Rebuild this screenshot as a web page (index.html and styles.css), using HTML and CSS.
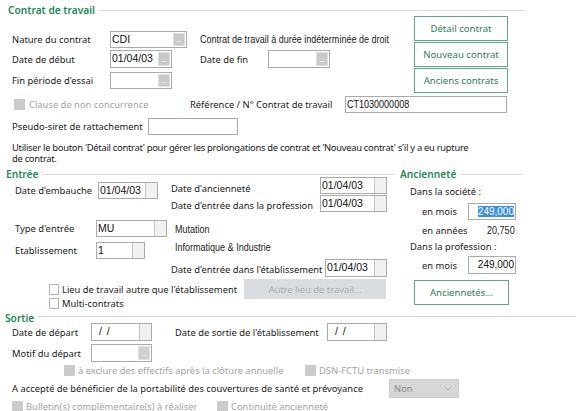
FILE: index.html
```html
<!DOCTYPE html>
<html lang="fr">
<head>
<meta charset="utf-8">
<title>Contrat de travail</title>
<link rel="stylesheet" href="styles.css">
</head>
<body>
<div class="page">

  <section class="contrat">
    <div class="legend lg-contrat"><span>Contrat de travail</span></div>
    <div class="top">
      <div class="top-left">
        <div class="row r1">
          <span class="lbl w98">Nature du contrat</span>
          <span class="fld w77 filled"><span class="val">CDI</span><span class="dots">...</span></span>
          <span class="txt narrow ml13">Contrat de travail à durée indéterminée de droit</span>
        </div>
        <div class="row r2">
          <span class="lbl w98">Date de début</span>
          <span class="fld w62 filled"><span class="val">01/04/03</span><span class="dots">...</span></span>
          <span class="lbl ml28 w68">Date de fin</span>
          <span class="fld w62 filled"><span class="val"></span><span class="dots">...</span></span>
        </div>
        <div class="row r3">
          <span class="lbl w98">Fin période d'essai</span>
          <span class="fld w62 filled"><span class="val"></span><span class="dots">...</span></span>
        </div>
      </div>
      <div class="btns">
        <button class="gbtn">Détail contrat</button>
        <button class="gbtn">Nouveau contrat</button>
        <button class="gbtn">Anciens contrats</button>
      </div>
    </div>
    <div class="row r-ref">
      <span class="chk dis"></span>
      <span class="lbl dim w160">Clause de non concurrence</span>
      <span class="lbl w155">Référence / N° Contrat de travail</span>
      <span class="fld w162"><span class="val"><span class="narrow">CT1030000008</span></span></span>
    </div>
    <div class="row r-siret">
      <span class="lbl w136">Pseudo-siret de rattachement</span>
      <span class="fld w90"><span class="val"></span></span>
    </div>
    <p class="note">Utiliser le bouton 'Détail contrat' pour gérer les prolongations de contrat et 'Nouveau contrat' s'il y a eu rupture de contrat.</p>
  </section>

  <div class="mid">
    <section class="entree">
      <div class="legend lg-entree"><span>Entrée</span></div>
      <div class="blk-a">
        <div class="emb">
          <span class="lbl w83">Date d'embauche</span>
          <span class="fld w60 light"><span class="val">01/04/03</span><span class="dots"></span></span>
        </div>
        <div class="anc-dates">
          <div class="row ra1">
            <span class="lbl w149">Date d'ancienneté</span>
            <span class="fld w67 light"><span class="val">01/04/03</span><span class="dots"></span></span>
          </div>
          <div class="row ra2">
            <span class="lbl w149">Date d'entrée dans la profession</span>
            <span class="fld w67 light"><span class="val">01/04/03</span><span class="dots"></span></span>
          </div>
        </div>
      </div>
      <div class="row re3">
        <span class="lbl w81">Type d'entrée</span>
        <span class="fld w71 light"><span class="val">MU</span><span class="dots"></span></span>
        <span class="txt narrow ml8">Mutation</span>
      </div>
      <div class="row re4">
        <span class="lbl w81">Etablissement</span>
        <span class="fld w49 light"><span class="val">1</span><span class="dots"></span></span>
        <span class="txt narrow ml30 up4">Informatique &amp; Industrie</span>
      </div>
      <div class="row re5">
        <span class="lbl w154">Date d'entrée dans l'établissement</span>
        <span class="fld w62 light"><span class="val">01/04/03</span><span class="dots"></span></span>
      </div>
      <div class="row re6">
        <span class="chk"></span>
        <span class="lbl w182">Lieu de travail autre que l'établissement</span>
        <button class="dbtn">Autre lieu de travail...</button>
      </div>
      <div class="row re7">
        <span class="chk"></span>
        <span class="lbl">Multi-contrats</span>
      </div>
    </section>

    <section class="anciennete">
      <div class="legend lg-anc"><span>Ancienneté</span></div>
      <div class="sub s1">Dans la société :</div>
      <div class="row ra-m1">
        <span class="lbl w46">en mois</span>
        <span class="fld w48 num"><span class="val"><span class="sel">249,000</span></span></span>
      </div>
      <div class="row ra-y">
        <span class="lbl w46">en années</span>
        <span class="numbox"><span class="txt narrow-r">20,750</span></span>
      </div>
      <div class="sub s2">Dans la profession :</div>
      <div class="row ra-m2">
        <span class="lbl w46">en mois</span>
        <span class="fld w48 num"><span class="val">249,000</span></span>
      </div>
      <button class="gbtn anc-btn">Anciennetés...</button>
    </section>
  </div>

  <section class="sortie">
    <div class="legend lg-sortie"><span>Sortie</span></div>
    <div class="row rs1">
      <span class="lbl w79">Date de départ</span>
      <span class="fld w61 light"><span class="val slash">/ /</span><span class="dots"></span></span>
      <span class="lbl ml23 w152">Date de sortie de l'établissement</span>
      <span class="fld w60 light"><span class="val slash">/ /</span><span class="dots"></span></span>
    </div>
    <div class="row rs2">
      <span class="lbl w79">Motif du départ</span>
      <span class="fld w61 light"><span class="val"></span><span class="dots dotted">...</span></span>
    </div>
    <div class="row rs3">
      <span class="chk dis"></span>
      <span class="lbl dim w227">à exclure des effectifs après la clôture annuelle</span>
      <span class="chk dis"></span>
      <span class="lbl dim">DSN-FCTU transmise</span>
    </div>
    <div class="row rs4">
      <span class="lbl w377">A accepté de bénéficier de la portabilité des couvertures de santé et prévoyance</span>
      <span class="sel-box"><span class="sel-val">Non</span><svg class="chev" width="8" height="5" viewBox="0 0 8 5"><path d="M0.5 0.5 L4 4 L7.5 0.5" fill="none" stroke="#b0b0b0" stroke-width="1"/></svg></span>
    </div>
    <div class="row rs5">
      <span class="chk dis"></span>
      <span class="lbl dim w191">Bulletin(s) complémentaire(s) à réaliser</span>
      <span class="chk dis"></span>
      <span class="lbl dim">Continuité ancienneté</span>
    </div>
  </section>

</div>
</body>
</html>
```

FILE: styles.css
```css
* { box-sizing: border-box; }

html, body {
  margin: 0;
  padding: 0;
  background: #ffffff;
}

body {
  width: 576px;
  height: 411px;
  overflow: hidden;
  font-family: "Noto Sans", "Open Sans", "DejaVu Sans", sans-serif;
  font-size: 9.4px;
  color: #1b1b1b;
}

.page {
  width: 576px;
  height: 411px;
}

/* ---------- generic ---------- */
.row {
  display: flex;
  align-items: center;
  white-space: nowrap;
}

.lbl {
  display: inline-block;
  white-space: nowrap;
  flex: none;
}

.dim { color: #a3a3a3; }

.txt {
  font-family: "Liberation Sans", Arial, sans-serif;
  font-size: 11px;
  color: #1b1b1b;
  white-space: nowrap;
}

/* condensed look of the original static texts */
.narrow {
  display: inline-block;
  font-family: "Liberation Sans", Arial, sans-serif;
  font-size: 11px;
  transform: scaleX(0.82);
  transform-origin: 0 50%;
  white-space: nowrap;
}
.narrow-r {
  display: inline-block;
  transform: scaleX(0.82);
  transform-origin: 100% 50%;
}

.legend {
  display: flex;
  align-items: center;
  height: 12px;
  color: #1e8a57;
  font-weight: 600;
  font-size: 10.2px;
  white-space: nowrap;
}
.legend::after {
  content: "";
  flex: 1;
  height: 0;
  border-top: 1px solid #dcdcdc;
  margin-left: 4px;
}

/* ---------- fields ---------- */
.fld {
  display: inline-flex;
  align-items: stretch;
  height: 17px;
  border: 1px solid #ababab;
  background: #ffffff;
  flex: none;
}
.fld .val {
  flex: 1;
  font-family: "Liberation Sans", Arial, sans-serif;
  font-size: 10.5px;
  line-height: 15px;
  padding-left: 1px;
  color: #111;
  overflow: hidden;
  white-space: nowrap;
}
.fld .val.slash { padding-left: 7px; letter-spacing: 1px; }

.fld .dots {
  flex: none;
  width: 12px;
  font-size: 7px;
  line-height: 1;
  color: #ffffff;
  text-align: center;
  display: flex;
  align-items: flex-end;
  justify-content: center;
  padding-bottom: 2px;
}
.fld.filled .dots {
  background: #c9c9c9;
  margin: 1px 1px 1px 0;
  border: 1px solid #dedede;
}
.fld.light .dots {
  background: #f1f1f1;
  border-left: 1px solid #c4c4c4;
  margin: 0;
}
.fld.light .dots.dotted {
  background: #cfcfcf;
  color: #fff;
  margin: 1px 1px 1px 0;
  border: 1px solid #e0e0e0;
}

.fld.num .val {
  text-align: right;
  padding-right: 1px;
  font-size: 10px;
}
.sel {
  background: #3b8ee8;
  color: #ffffff;
}

.numbox {
  display: inline-block;
  width: 48px;
  text-align: right;
  padding-right: 1px;
}

/* ---------- widths ---------- */
.w46 { width: 46px; }
.w48 { width: 48px; }
.w49 { width: 49px; }
.w60 { width: 60px; }
.w61 { width: 61px; }
.w62 { width: 62px; }
.w67 { width: 67px; }
.w68 { width: 68px; }
.w71 { width: 71px; }
.w77 { width: 77px; }
.w79 { width: 79px; }
.w81 { width: 81px; }
.w83 { width: 83px; }
.w90 { width: 90px; }
.w98 { width: 98px; }
.w136 { width: 136px; }
.w149 { width: 149px; }
.w152 { width: 152px; }
.w154 { width: 154px; }
.w155 { width: 155px; }
.w160 { width: 160px; }
.w162 { width: 162px; }
.w182 { width: 182px; }
.w191 { width: 191px; }
.w227 { width: 227px; }
.w377 { width: 377px; }

.ml8 { margin-left: 8px; }
.ml13 { margin-left: 13px; }
.ml23 { margin-left: 23px; }
.ml28 { margin-left: 28px; }
.ml30 { margin-left: 30px; }
.up4 { position: relative; top: -4px; }

/* ---------- checkbox ---------- */
.chk {
  display: inline-block;
  flex: none;
  width: 11px;
  height: 11px;
  border: 1px solid #a8a8a8;
  background: #fff;
  margin-right: 4px;
}
.chk.dis {
  border-color: #cbcbcb;
  background: #cbcbcb;
}

/* ---------- buttons ---------- */
.gbtn {
  display: block;
  width: 94px;
  height: 25px;
  padding: 0;
  border: 1px solid #5aa888;
  background: #ffffff;
  color: #2f7d5c;
  font-family: "Noto Sans", "Open Sans", sans-serif;
  font-size: 9.6px;
  cursor: default;
}

.dbtn {
  width: 142px;
  height: 20px;
  padding: 0;
  border: none;
  background: #d9dde1;
  color: #a9afb5;
  font-family: "Noto Sans", "Open Sans", sans-serif;
  font-size: 9.4px;
}

/* ---------- contrat section ---------- */
.contrat {
  padding-top: 4px;
}
.lg-contrat {
  margin-left: 8px;
  width: 517px;
}
.top {
  display: flex;
  height: 77px;
}
.top-left {
  width: 414px;
  padding-left: 12px;
}
.r1 { margin-top: 14px; height: 18px; }
.r2 { margin-top: 2px; height: 18px; }
.r2 .fld { height: 18px; }
.r3 { margin-top: 3px; height: 18px; }

.btns {
  display: flex;
  flex-direction: column;
  gap: 1px;
}

.r-ref {
  margin-top: 2px;
  height: 18px;
  padding-left: 14px;
}
.r-ref .lbl.w160 { width: 161px; }
.r-ref .fld { height: 17px; }

.r-siret {
  margin-top: 4px;
  height: 18px;
  padding-left: 12px;
}

.note {
  margin: 7px 0 0 12px;
  width: 464px;
  line-height: 11px;
  letter-spacing: -0.28px;
}

/* ---------- middle ---------- */
.mid {
  display: flex;
  margin-top: 4px;
}
.entree {
  width: 396px;
}
.lg-entree {
  margin-left: 6px;
}
.blk-a {
  display: flex;
  margin-top: -4px;
}
.emb {
  display: flex;
  align-items: center;
  height: 17px;
  margin-top: 6px;
  padding-left: 15px;
}
.emb .fld { height: 17px; }
.anc-dates {
  margin-left: 13px;
}
.ra1 { height: 18px; }
.ra1 .fld { height: 17px; }
.ra1 .lbl { position: relative; top: 3px; }
.ra2 { margin-top: 1px; height: 17px; }
.ra2 .fld { height: 17px; }
.ra2 .lbl { position: relative; top: 2px; }

.re3 { margin-top: 8px; height: 17px; padding-left: 15px; }
.re4 { margin-top: 5px; height: 17px; padding-left: 15px; }
.re5 { margin-top: 0; height: 18px; padding-left: 171px; }
.re5 .fld { height: 18px; }
.re5 .lbl { position: relative; top: 1px; }
.re6 { margin-top: 2px; height: 20px; padding-left: 49px; }
.re6 .chk, .re7 .chk { width: 10px; height: 11px; margin-right: 3px; border-color: #b4b4b4; }
.re7 { margin-top: -2px; height: 12px; padding-left: 49px; }

.anciennete {
  width: 122px;
  margin-left: 4px;
}
.sub {
  height: 14px;
  line-height: 14px;
  padding-left: 10px;
}
.s1 { margin-top: 5px; }
.ra-m1 { margin-top: 4px; height: 17px; padding-left: 22px; }
.ra-y { margin-top: 2px; height: 17px; padding-left: 22px; }
.s2 { margin-top: 1px; }
.ra-m2 { margin-top: 2px; height: 18px; padding-left: 22px; }
.ra-m2 .fld { height: 18px; }
.anc-btn {
  margin: 6px 0 0 14px;
  width: 95px;
}

/* ---------- sortie ---------- */
.sortie {
  margin-top: 4px;
}
.lg-sortie {
  margin-left: 5px;
  height: 10px;
}
.lg-sortie::after { position: relative; top: -2px; }
.rs1 { margin-top: 0; height: 18px; padding-left: 12px; }
.rs1 .fld { height: 18px; }
.rs2 { margin-top: 3px; height: 18px; padding-left: 12px; }
.rs2 .fld { height: 18px; }
.rs3 { margin-top: 2px; height: 12px; padding-left: 64px; }
.rs3 .chk { margin-right: 3px; }
.rs4 { margin-top: 2px; height: 20px; padding-left: 12px; }
.rs5 { margin-top: 2px; height: 12px; padding-left: 12px; }
.rs5 .chk { margin-right: 3px; }

.sel-box {
  display: inline-flex;
  align-items: center;
  justify-content: space-between;
  width: 70px;
  height: 19px;
  background: #d7d7d7;
  border: 1px solid #cdcdcd;
  padding: 0 6px 0 4px;
  flex: none;
}
.sel-val {
  font-family: "Noto Sans", "Open Sans", sans-serif;
  font-size: 9.4px;
  color: #8c8c8c;
}
```
